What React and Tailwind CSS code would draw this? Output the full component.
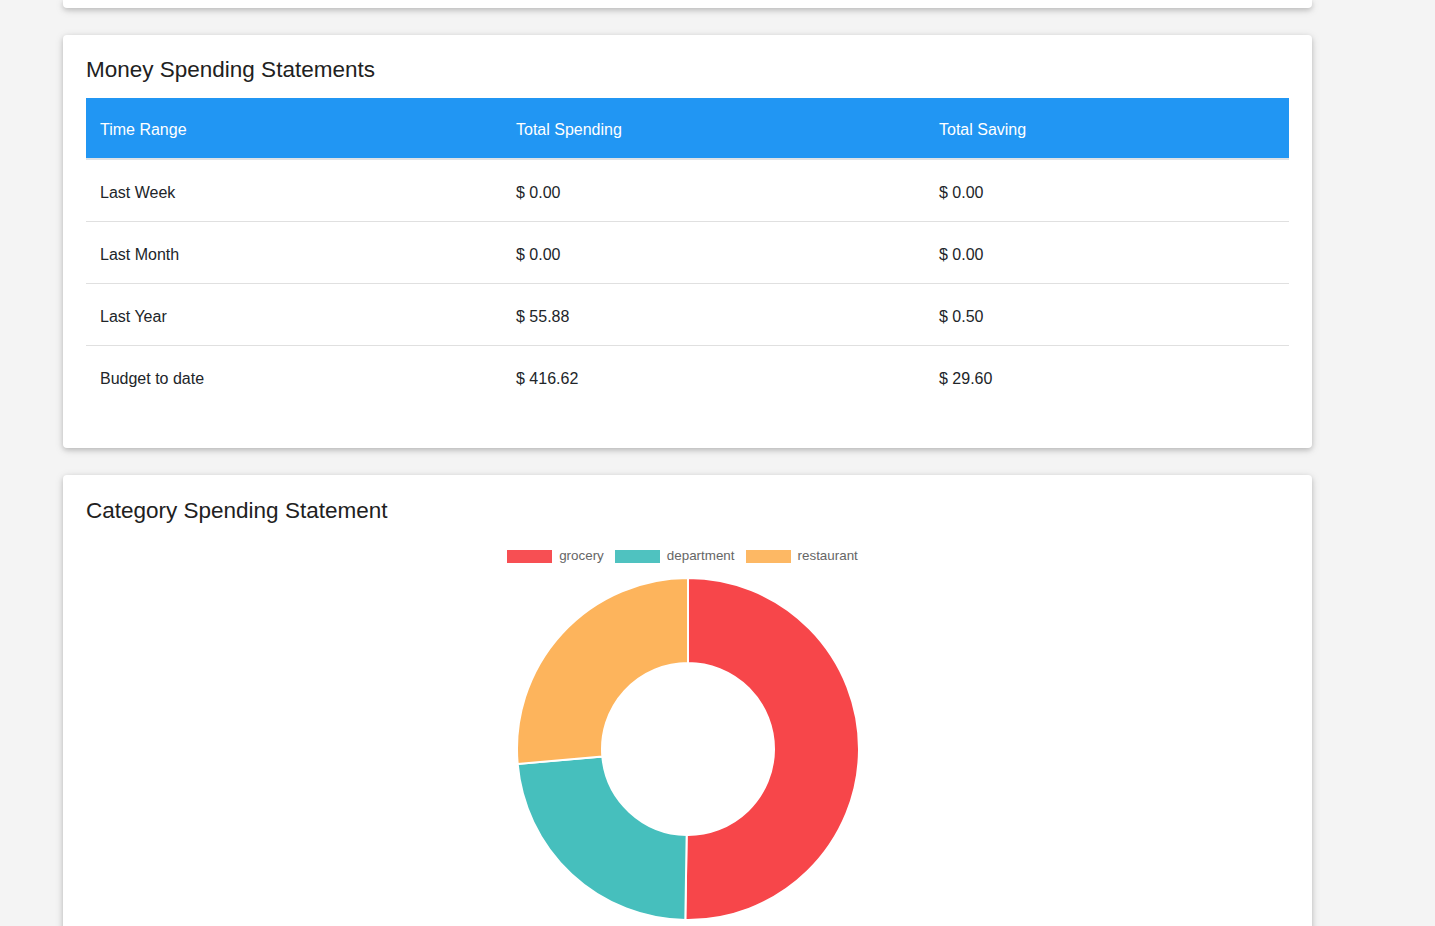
import React from 'react'

const rows = [
  { range: 'Last Week', spending: '$ 0.00', saving: '$ 0.00' },
  { range: 'Last Month', spending: '$ 0.00', saving: '$ 0.00' },
  { range: 'Last Year', spending: '$ 55.88', saving: '$ 0.50' },
  { range: 'Budget to date', spending: '$ 416.62', saving: '$ 29.60' },
]

const slices = [
  { label: 'grocery', color: '#F7464A', from: 0, to: 180.9 },
  { label: 'department', color: '#46BFBD', from: 180.9, to: 265 },
  { label: 'restaurant', color: '#FDB45C', from: 265, to: 360 },
]

const cardCls =
  'bg-white rounded-[4px] shadow-[0_2px_5px_0_rgba(0,0,0,0.16),0_2px_10px_0_rgba(0,0,0,0.12)]'

function pt(cx, cy, r, deg) {
  const a = (deg * Math.PI) / 180
  return [cx + r * Math.sin(a), cy - r * Math.cos(a)]
}

function arcPath(cx, cy, ro, ri, from, to) {
  const large = to - from > 180 ? 1 : 0
  const [x1, y1] = pt(cx, cy, ro, from)
  const [x2, y2] = pt(cx, cy, ro, to)
  const [x3, y3] = pt(cx, cy, ri, to)
  const [x4, y4] = pt(cx, cy, ri, from)
  return `M${x1} ${y1} A${ro} ${ro} 0 ${large} 1 ${x2} ${y2} L${x3} ${y3} A${ri} ${ri} 0 ${large} 0 ${x4} ${y4} Z`
}

function Donut() {
  const c = 173
  return (
    <svg width="346" height="346" viewBox="0 0 346 346">
      {slices.map(s => (
        <path
          key={s.label}
          d={arcPath(c, c, 171, 86, s.from, s.to)}
          fill={s.color}
          stroke="#fff"
          strokeWidth="2"
        />
      ))}
    </svg>
  )
}

export default function App() {
  return (
    <div
      className="min-h-screen bg-[#f4f4f4] pl-[63px]"
      style={{ fontFamily: '"Liberation Sans", Arial, sans-serif' }}
    >
      <div className="w-[1249px]">
        <div className={`${cardCls} h-[8px] rounded-t-none`} />

        <div className={`${cardCls} mt-[27px] px-[23px] pt-[21px] pb-[40px]`}>
          <h5 className="text-[22.5px] leading-[28px] h-[28px] text-[#212121] mb-[14px]">
            Money Spending Statements
          </h5>
          <div className="text-[16px]">
            <div className="grid grid-cols-[416px_423px_1fr] bg-[#2196f3] text-white h-[62px] pt-[4px] items-center border-b-2 border-[#dee2e6]">
              <div className="pl-[14px]">Time Range</div>
              <div className="pl-[14px]">Total Spending</div>
              <div className="pl-[14px]">Total Saving</div>
            </div>
            {rows.map((r, i) => (
              <div
                key={r.range}
                className={`grid grid-cols-[416px_423px_1fr] h-[62px] pt-[4px] items-center text-[#212529] ${
                  i < rows.length - 1 ? 'border-b border-[#e0e0e0]' : ''
                }`}
              >
                <div className="pl-[14px]">{r.range}</div>
                <div className="pl-[14px]">{r.spending}</div>
                <div className="pl-[14px]">{r.saving}</div>
              </div>
            ))}
          </div>
        </div>

        <div className={`${cardCls} mt-[27px] px-[23px] pt-[22px] pb-[40px]`}>
          <h5 className="text-[22.5px] leading-[28px] h-[28px] text-[#212121]">
            Category Spending Statement
          </h5>
          <div className="flex flex-col items-center mt-[25px]">
            <div className="flex items-center h-[13px] text-[13.4px] text-[#666] ml-[-10px]">
              {slices.map(s => (
                <div key={s.label} className="flex items-center mr-[11px] last:mr-0">
                  <span
                    className="inline-block w-[45px] h-[13px] mr-[7px]"
                    style={{ background: s.color, opacity: 0.95 }}
                  />
                  <span>{s.label}</span>
                </div>
              ))}
            </div>
            <div className="mt-[13px] ml-[1px]">
              <Donut />
            </div>
          </div>
        </div>
      </div>
    </div>
  )
}
